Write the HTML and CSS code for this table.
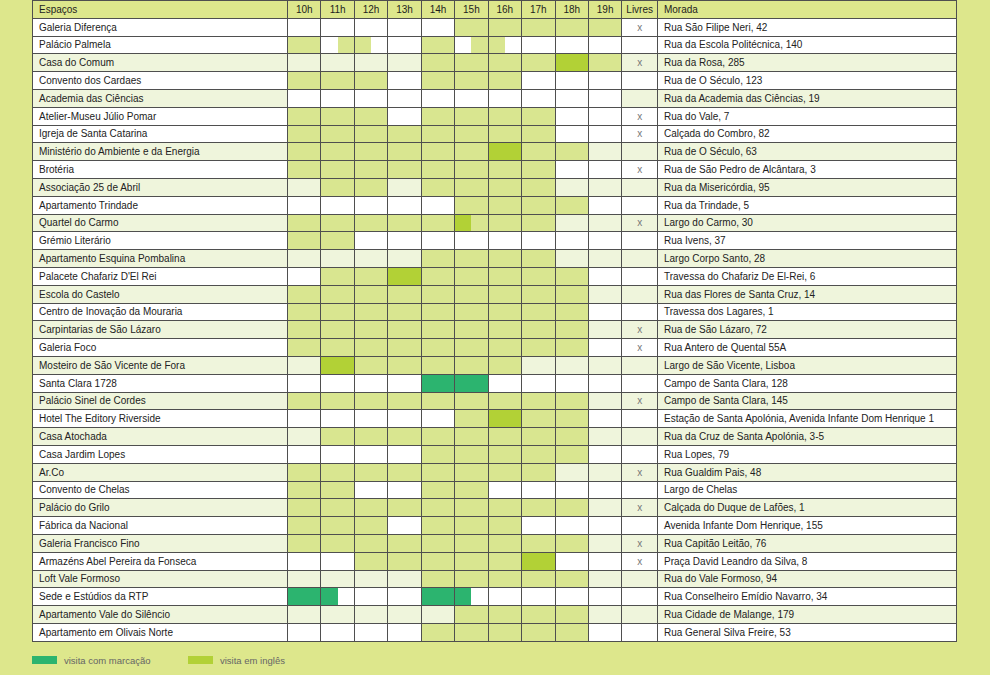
FILE: index.html
```html
<!DOCTYPE html>
<html lang="pt">
<head>
<meta charset="utf-8">
<title>Espaços</title>
<link rel="stylesheet" href="styles.css">
</head>
<body>
<table class="grid">
<colgroup>
<col class="c-name"><col class="c-h"><col class="c-h"><col class="c-h"><col class="c-h"><col class="c-h"><col class="c-h"><col class="c-h"><col class="c-h"><col class="c-h"><col class="c-h"><col class="c-liv"><col class="c-mor">
</colgroup>
<thead>
<tr><th class="name">Espaços</th><th>10h</th><th>11h</th><th>12h</th><th>13h</th><th>14h</th><th>15h</th><th>16h</th><th>17h</th><th>18h</th><th>19h</th><th>Livres</th><th class="name">Morada</th></tr>
</thead>
<tbody>
<tr><td class="name">Galeria Diferença</td><td></td><td></td><td></td><td></td><td></td><td class="l"></td><td class="l"></td><td class="l"></td><td class="l"></td><td class="l"></td><td class="x">x</td><td class="name">Rua São Filipe Neri, 42</td></tr>
<tr><td class="name">Palácio Palmela</td><td class="l"></td><td class="s"><i></i><i class="l"></i></td><td class="s"><i class="l"></i><i></i></td><td></td><td class="l"></td><td class="s"><i></i><i class="l"></i></td><td class="s"><i class="l"></i><i></i></td><td></td><td></td><td></td><td class="x"></td><td class="name">Rua da Escola Politécnica, 140</td></tr>
<tr class="t"><td class="name">Casa do Comum</td><td></td><td></td><td></td><td></td><td class="l"></td><td class="l"></td><td class="l"></td><td class="l"></td><td class="b"></td><td class="l"></td><td class="x">x</td><td class="name">Rua da Rosa, 285</td></tr>
<tr><td class="name">Convento dos Cardaes</td><td class="l"></td><td class="l"></td><td class="l"></td><td></td><td class="l"></td><td class="l"></td><td class="l"></td><td></td><td></td><td></td><td class="x"></td><td class="name">Rua de O Século, 123</td></tr>
<tr class="t"><td class="name">Academia das Ciências</td><td class="w"></td><td class="w"></td><td class="w"></td><td class="w"></td><td class="w"></td><td class="w"></td><td class="w"></td><td class="w"></td><td class="w"></td><td class="w"></td><td class="x"></td><td class="name">Rua da Academia das Ciências, 19</td></tr>
<tr><td class="name">Atelier-Museu Júlio Pomar</td><td class="l"></td><td class="l"></td><td class="l"></td><td></td><td class="l"></td><td class="l"></td><td class="l"></td><td class="l"></td><td></td><td></td><td class="x">x</td><td class="name">Rua do Vale, 7</td></tr>
<tr><td class="name">Igreja de Santa Catarina</td><td class="l"></td><td class="l"></td><td class="l"></td><td class="l"></td><td class="l"></td><td class="l"></td><td class="l"></td><td class="l"></td><td></td><td></td><td class="x">x</td><td class="name">Calçada do Combro, 82</td></tr>
<tr class="t"><td class="name">Ministério do Ambiente e da Energia</td><td class="l"></td><td class="l"></td><td class="l"></td><td class="l"></td><td class="l"></td><td class="l"></td><td class="b"></td><td class="l"></td><td class="l"></td><td></td><td class="x"></td><td class="name">Rua de O Século, 63</td></tr>
<tr><td class="name">Brotéria</td><td class="l"></td><td class="l"></td><td class="l"></td><td class="l"></td><td class="l"></td><td class="l"></td><td class="l"></td><td class="l"></td><td></td><td></td><td class="x">x</td><td class="name">Rua de São Pedro de Alcântara, 3</td></tr>
<tr class="t"><td class="name">Associação 25 de Abril</td><td></td><td class="l"></td><td class="l"></td><td></td><td class="l"></td><td class="l"></td><td class="l"></td><td class="l"></td><td></td><td></td><td class="x"></td><td class="name">Rua da Misericórdia, 95</td></tr>
<tr><td class="name">Apartamento Trindade</td><td></td><td></td><td></td><td></td><td></td><td class="l"></td><td class="l"></td><td class="l"></td><td class="l"></td><td></td><td class="x"></td><td class="name">Rua da Trindade, 5</td></tr>
<tr class="t"><td class="name">Quartel do Carmo</td><td class="l"></td><td class="l"></td><td class="l"></td><td class="l"></td><td class="l"></td><td class="s"><i class="b"></i><i class="l"></i></td><td class="l"></td><td class="l"></td><td></td><td></td><td class="x">x</td><td class="name">Largo do Carmo, 30</td></tr>
<tr><td class="name">Grémio Literário</td><td class="l"></td><td class="l"></td><td></td><td></td><td></td><td></td><td></td><td></td><td></td><td></td><td class="x"></td><td class="name">Rua Ivens, 37</td></tr>
<tr class="t"><td class="name">Apartamento Esquina Pombalina</td><td></td><td></td><td></td><td></td><td class="l"></td><td class="l"></td><td class="l"></td><td class="l"></td><td></td><td></td><td class="x"></td><td class="name">Largo Corpo Santo, 28</td></tr>
<tr><td class="name">Palacete Chafariz D'El Rei</td><td></td><td class="l"></td><td class="l"></td><td class="b"></td><td class="l"></td><td class="l"></td><td class="l"></td><td class="l"></td><td class="l"></td><td></td><td class="x"></td><td class="name">Travessa do Chafariz De El-Rei, 6</td></tr>
<tr class="t"><td class="name">Escola do Castelo</td><td class="l"></td><td class="l"></td><td class="l"></td><td class="l"></td><td class="l"></td><td class="l"></td><td class="l"></td><td class="l"></td><td class="l"></td><td></td><td class="x"></td><td class="name">Rua das Flores de Santa Cruz, 14</td></tr>
<tr><td class="name">Centro de Inovação da Mouraria</td><td class="l"></td><td class="l"></td><td class="l"></td><td class="l"></td><td class="l"></td><td class="l"></td><td class="l"></td><td class="l"></td><td class="l"></td><td></td><td class="x"></td><td class="name">Travessa dos Lagares, 1</td></tr>
<tr class="t"><td class="name">Carpintarias de São Lázaro</td><td class="l"></td><td class="l"></td><td class="l"></td><td class="l"></td><td class="l"></td><td class="l"></td><td class="l"></td><td class="l"></td><td class="l"></td><td></td><td class="x">x</td><td class="name">Rua de São Lázaro, 72</td></tr>
<tr><td class="name">Galeria Foco</td><td class="l"></td><td class="l"></td><td class="l"></td><td class="l"></td><td class="l"></td><td class="l"></td><td class="l"></td><td class="l"></td><td class="l"></td><td></td><td class="x">x</td><td class="name">Rua Antero de Quental 55A</td></tr>
<tr class="t"><td class="name">Mosteiro de São Vicente de Fora</td><td></td><td class="b"></td><td class="l"></td><td class="l"></td><td class="l"></td><td class="l"></td><td class="l"></td><td></td><td></td><td></td><td class="x"></td><td class="name">Largo de São Vicente, Lisboa</td></tr>
<tr><td class="name">Santa Clara 1728</td><td></td><td></td><td></td><td></td><td class="d"></td><td class="d"></td><td></td><td></td><td></td><td></td><td class="x"></td><td class="name">Campo de Santa Clara, 128</td></tr>
<tr class="t"><td class="name">Palácio Sinel de Cordes</td><td class="l"></td><td class="l"></td><td class="l"></td><td class="l"></td><td class="l"></td><td class="l"></td><td class="l"></td><td class="l"></td><td class="l"></td><td></td><td class="x">x</td><td class="name">Campo de Santa Clara, 145</td></tr>
<tr><td class="name">Hotel The Editory Riverside</td><td></td><td></td><td></td><td></td><td></td><td class="l"></td><td class="b"></td><td class="l"></td><td class="l"></td><td></td><td class="x"></td><td class="name">Estação de Santa Apolónia, Avenida Infante Dom Henrique 1</td></tr>
<tr class="t"><td class="name">Casa Atochada</td><td></td><td class="l"></td><td class="l"></td><td class="l"></td><td class="l"></td><td class="l"></td><td class="l"></td><td class="l"></td><td class="l"></td><td></td><td class="x"></td><td class="name">Rua da Cruz de Santa Apolónia, 3-5</td></tr>
<tr><td class="name">Casa Jardim Lopes</td><td></td><td></td><td></td><td></td><td class="l"></td><td class="l"></td><td class="l"></td><td class="l"></td><td class="l"></td><td></td><td class="x"></td><td class="name">Rua Lopes, 79</td></tr>
<tr class="t"><td class="name">Ar.Co</td><td class="l"></td><td class="l"></td><td class="l"></td><td class="l"></td><td class="l"></td><td class="l"></td><td class="l"></td><td class="l"></td><td></td><td></td><td class="x">x</td><td class="name">Rua Gualdim Pais, 48</td></tr>
<tr><td class="name">Convento de Chelas</td><td class="l"></td><td class="l"></td><td></td><td></td><td class="l"></td><td class="l"></td><td></td><td></td><td></td><td></td><td class="x"></td><td class="name">Largo de Chelas</td></tr>
<tr class="t"><td class="name">Palácio do Grilo</td><td class="l"></td><td class="l"></td><td class="l"></td><td class="l"></td><td class="l"></td><td class="l"></td><td class="l"></td><td class="l"></td><td class="l"></td><td></td><td class="x">x</td><td class="name">Calçada do Duque de Lafões, 1</td></tr>
<tr><td class="name">Fábrica da Nacional</td><td class="l"></td><td class="l"></td><td class="l"></td><td></td><td class="l"></td><td class="l"></td><td class="l"></td><td></td><td></td><td></td><td class="x"></td><td class="name">Avenida Infante Dom Henrique, 155</td></tr>
<tr class="t"><td class="name">Galeria Francisco Fino</td><td class="l"></td><td class="l"></td><td class="l"></td><td class="l"></td><td class="l"></td><td class="l"></td><td class="l"></td><td class="l"></td><td class="l"></td><td></td><td class="x">x</td><td class="name">Rua Capitão Leitão, 76</td></tr>
<tr><td class="name">Armazéns Abel Pereira da Fonseca</td><td></td><td></td><td class="l"></td><td class="l"></td><td class="l"></td><td class="l"></td><td class="l"></td><td class="b"></td><td></td><td></td><td class="x">x</td><td class="name">Praça David Leandro da Silva, 8</td></tr>
<tr class="t"><td class="name">Loft Vale Formoso</td><td></td><td></td><td></td><td></td><td class="l"></td><td class="l"></td><td class="l"></td><td class="l"></td><td class="l"></td><td></td><td class="x"></td><td class="name">Rua do Vale Formoso, 94</td></tr>
<tr><td class="name">Sede e Estúdios da RTP</td><td class="d"></td><td class="s"><i class="d"></i><i></i></td><td></td><td></td><td class="d"></td><td class="s"><i class="d"></i><i></i></td><td></td><td></td><td></td><td></td><td class="x"></td><td class="name">Rua Conselheiro Emídio Navarro, 34</td></tr>
<tr class="t"><td class="name">Apartamento Vale do Silêncio</td><td></td><td></td><td></td><td></td><td></td><td class="l"></td><td class="l"></td><td class="l"></td><td class="l"></td><td></td><td class="x"></td><td class="name">Rua Cidade de Malange, 179</td></tr>
<tr><td class="name">Apartamento em Olivais Norte</td><td></td><td></td><td></td><td></td><td class="l"></td><td class="l"></td><td class="l"></td><td class="l"></td><td class="l"></td><td></td><td class="x"></td><td class="name">Rua General Silva Freire, 53</td></tr>
</tbody>
</table>
<div class="legend">
  <div class="legend-item"><span class="swatch d"></span><span>visita com marcação</span></div>
  <div class="legend-item"><span class="swatch b"></span><span>visita em inglês</span></div>
</div>
</body>
</html>
```
FILE: styles.css
```css
html, body {
  margin: 0;
  padding: 0;
}
body {
  background: #dde78c;
  font-family: "Liberation Sans", Arial, sans-serif;
  color: #222;
  width: 990px;
  height: 675px;
  overflow: hidden;
}
.grid {
  margin: 0 0 0 32px;
  width: 924px;
  table-layout: fixed;
  border-collapse: collapse;
  font-size: 10px;
}
.c-name { width: 255px; }
.c-h { width: 33.44px; }
.c-liv { width: 35.6px; }
.c-mor { width: 299px; }
.grid th,
.grid td {
  border: 1px solid #4f4f4f;
  height: 15.8px;
  padding: 1px 0 0;
  text-align: center;
  vertical-align: middle;
  white-space: nowrap;
  overflow: hidden;
  line-height: 12px;
  background: #fff;
}
.grid th {
  background: #dde78c;
  font-weight: normal;
  color: #1e1e1e;
}
.grid .name {
  text-align: left;
  padding-left: 6px;
}
.grid tr.t td {
  background: #eff5dc;
}
.grid tr.t td.w { background: #fff; }
.grid td.l, .grid tr.t td.l { background: #d9e690; }
.grid td.b, .grid tr.t td.b { background: #b2d136; }
.grid td.d, .grid tr.t td.d { background: #2cb46f; }
.grid td.x {
  color: #777;
  font-size: 10px;
}
.grid td.s {
  font-size: 0;
  line-height: 0;
  padding: 0;
  height: 16.8px;
}
.grid td.s i {
  display: inline-block;
  width: 50%;
  height: 16.8px;
  vertical-align: top;
}
.grid td.s i.l { background: #d9e690; }
.grid td.s i.b { background: #b2d136; }
.grid td.s i.d { background: #2cb46f; }
.legend {
  display: flex;
  margin: 13px 0 0 32px;
  font-size: 9.5px;
  color: #666;
}
.legend-item {
  display: flex;
  align-items: center;
  gap: 7px;
  width: 156px;
}
.swatch {
  display: inline-block;
  width: 25px;
  height: 8px;
}
.swatch.d { background: #2cb46f; }
.swatch.b { background: #b2d136; }
```
